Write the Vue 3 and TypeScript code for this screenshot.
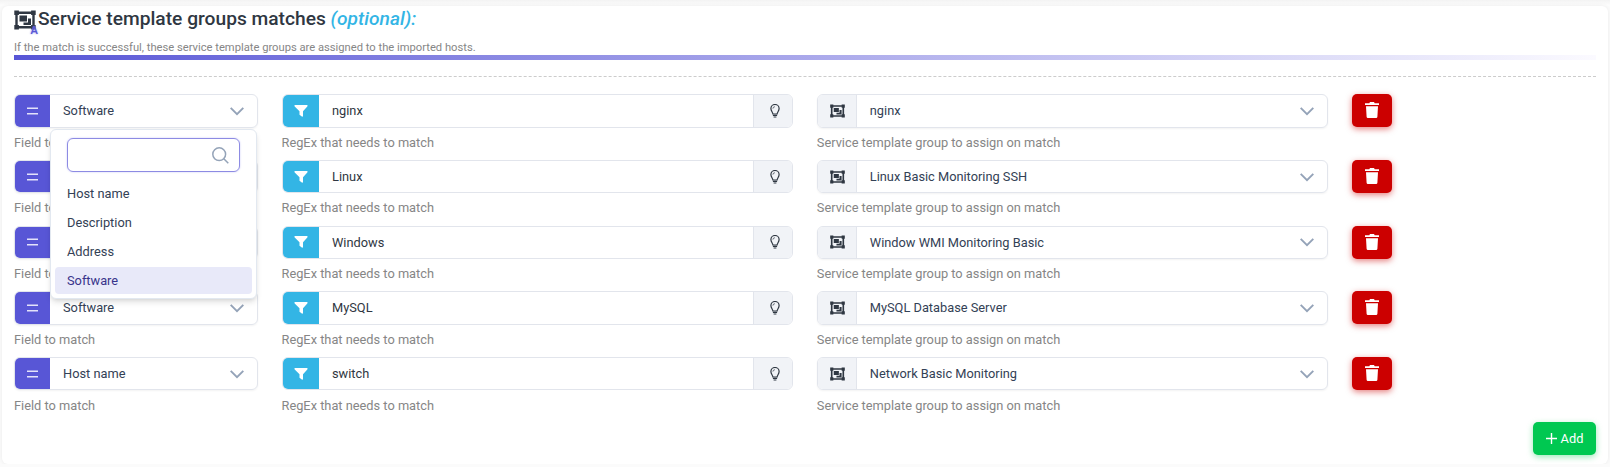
<script setup lang="ts">
import { ref } from 'vue'

interface MatchRow {
  field: string
  regex: string
  group: string
}

const fields = ['Host name', 'Description', 'Address', 'Software']
const openRow = ref<number>(0)
const search = ref('')
const rows = ref<MatchRow[]>([
  { field: 'Software', regex: 'nginx', group: 'nginx' },
  { field: 'Software', regex: 'Linux', group: 'Linux Basic Monitoring SSH' },
  { field: 'Software', regex: 'Windows', group: 'Window WMI Monitoring Basic' },
  { field: 'Software', regex: 'MySQL', group: 'MySQL Database Server' },
  { field: 'Host name', regex: 'switch', group: 'Network Basic Monitoring' },
])

function toggle(index: number): void {
  openRow.value = openRow.value === index ? -1 : index
}

function choose(row: MatchRow, field: string): void {
  row.field = field
  openRow.value = -1
}

function addRow(): void {
  rows.value.push({ field: 'Host name', regex: '', group: '' })
}
</script>

<template>
  <svg class="sprite" width="0" height="0" aria-hidden="true">
    <symbol id="object-group" viewBox="0 0 22 20">
      <path d="M2.500 2.700H19.500V17.300H2.500Z" fill="none" stroke="currentColor" stroke-width="2.400" />
      <path d="M0.300 0.500h4.600v4.600h-4.600zM17.100 0.500h4.600v4.600h-4.600zM0.300 14.900h4.600v4.600h-4.600zM17.100 14.900h4.600v4.600h-4.600z" fill="currentColor" />
      <path d="M5.500 5.500h7.500v6h-7.500zM14 8.500h3v6.500H9.500v-2.500H14z" fill="currentColor" />
    </symbol>
    <symbol id="chevron" viewBox="0 0 14 14">
      <path d="M0.700 3.800L7 10.100L13.300 3.800" fill="none" stroke="currentColor" stroke-width="1.900" />
    </symbol>
  </svg>

  <div class="previous-card"></div>
  <section class="card">
    <header>
      <h2>
        <span class="title-icon">
          <svg class="group-icon"><use href="#object-group" /></svg>
          <span class="badge">A</span>
        </span>
        <span>Service template groups matches <em>(optional):</em></span>
      </h2>
      <p class="description">If the match is successful, these service template groups are assigned to the imported hosts.</p>
      <div class="gradient"></div>
    </header>

    <div class="rows">
      <div v-for="(row, index) in rows" :key="index" class="row">
        <div class="col">
          <div class="control soft">
            <span class="addon primary">
              <svg class="equals" viewBox="0 0 11 8"><path d="M0 1.200H11M0 6.800H11" /></svg>
            </span>
            <button class="select" type="button" @click="toggle(index)">
              {{ row.field }}
              <svg class="chevron"><use href="#chevron" /></svg>
            </button>
            <div v-if="openRow === index" class="menu">
              <div class="search">
                <input v-model="search" type="text" />
                <svg viewBox="0 0 17 17">
                  <circle cx="7.200" cy="7.200" r="6.400" />
                  <path d="M11.800 11.800L16.300 16.300" />
                </svg>
              </div>
              <ul>
                <li
                  v-for="field in fields"
                  :key="field"
                  :class="{ selected: field === row.field }"
                  @click="choose(row, field)"
                >{{ field }}</li>
              </ul>
            </div>
          </div>
          <div class="help">Field to match</div>
        </div>

        <div class="col">
          <div class="control">
            <span class="addon info">
              <svg class="filter" viewBox="0 0 14 12"><path d="M0.800 0H13.200Q14 0.800 13.300 1.600L9 6.200V11.300Q8.500 12 7.800 11.600L5.500 9.800V6.200L0.700 1.600Q0 0.800 0.800 0Z" /></svg>
            </span>
            <input v-model="row.regex" class="text-input" type="text" />
            <span class="addon muted right">
              <svg class="bulb" viewBox="0 0 10 14">
                <path d="M2.900 10C2.800 8.100 0.900 7 0.900 4.500A4.100 4 0 0 1 9.100 4.500C9.100 7 7.200 8.100 7.100 10Z" />
                <path d="M2.900 4.600Q3 2.800 4.900 2.700" class="fine" />
                <path d="M2.900 11.400H7.100M3.600 13H6.400" />
              </svg>
            </span>
          </div>
          <div class="help">RegEx that needs to match</div>
        </div>

        <div class="col">
          <div class="control soft">
            <span class="addon muted left"><svg class="group-small"><use href="#object-group" /></svg></span>
            <button class="select" type="button">
              {{ row.group }}
              <svg class="chevron"><use href="#chevron" /></svg>
            </button>
          </div>
          <div class="help">Service template group to assign on match</div>
        </div>

        <button class="delete" type="button" aria-label="Delete" @click="rows.splice(index, 1)">
          <svg viewBox="0 0 14 16">
            <path d="M0 1.200H4.300L5 0H9L9.700 1.200H14V3H0ZM1 4.200H13L12.400 14.800Q12.300 16 11.100 16H2.900Q1.700 16 1.600 14.800Z" />
          </svg>
        </button>
      </div>
    </div>

    <footer>
      <button class="add" type="button" @click="addRow">
        <svg viewBox="0 0 11 11"><path d="M5.500 0V11M0 5.500H11" /></svg>Add
      </button>
    </footer>
  </section>
</template>

<style>
html,
body {
  background: #fbfbfb;
  overflow: hidden;
}
#app {
  font-family: Roboto, "Liberation Sans", sans-serif;
  font-size: 12.800px;
  line-height: 19.500px;
}
</style>

<style scoped>
* {
  box-sizing: border-box;
}
button,
input {
  font: inherit;
  border: 0;
  padding: 0;
}
.sprite {
  position: absolute;
}
.previous-card {
  height: 6px;
  background: linear-gradient(#f3f3f3, #fcfcfc 5px);
}
.card {
  height: 458px;
  margin: 0 2px;
  padding: 0 12px;
  background: #fff;
  border-radius: 6px;
  box-shadow: 0 0 4px rgba(0, 0, 0, 0.07);
}
header {
  height: 71px;
  border-bottom: 1px dashed #ccc;
}
h2 {
  display: flex;
  height: 26px;
  margin: 0;
  color: #2f3742;
  font-size: 19.200px;
  font-weight: 500;
  line-height: 26px;
}
h2 em {
  color: #33b5e5;
}
.title-icon {
  position: relative;
  width: 24px;
}
.group-icon {
  display: block;
  width: 22px;
  height: 20px;
  margin-top: 4px;
}
.badge {
  position: absolute;
  left: 16.500px;
  top: 18px;
  color: #5856d6;
  font-size: 11px;
  line-height: 14px;
  text-shadow: 0 0 2px #8d8be3;
}
.description {
  height: 23px;
  margin: 0;
  padding-top: 6px;
  color: #868686;
  font-size: 11.200px;
  line-height: 19px;
}
.gradient {
  height: 5px;
  background: linear-gradient(90deg, #5856d6, #fbfaff);
}
.rows {
  padding-top: 17.300px;
}
.row {
  display: grid;
  grid-template-columns: 243.500px 511.300px 511.200px 40px;
  column-gap: 24px;
  height: 65.700px;
  align-items: start;
}
.control {
  position: relative;
  display: flex;
  height: 33.250px;
  border: 1px solid #e2e5ec;
  border-radius: 6px;
}
.soft {
  box-shadow: 0 1px 2px rgba(0, 0, 0, 0.05);
}
.help {
  padding-top: 5.250px;
  color: #868686;
}
.addon {
  display: flex;
  flex: none;
  align-items: center;
  justify-content: center;
  width: 36px;
  border-radius: 5px 0 0 5px;
  color: #fff;
}
.primary {
  width: 35px;
  background: #5856d6;
}
.equals {
  width: 11px;
  height: 8px;
  stroke: #e3e2fa;
  stroke-width: 1.500;
}
.info {
  background: #33b5e5;
}
.muted {
  width: 39px;
  background: #f1f3f7;
  color: #2f3742;
}
.left {
  border-right: 1px solid #e2e5ec;
}
.right {
  border-left: 1px solid #e2e5ec;
  border-radius: 0 5px 5px 0;
}
.filter {
  width: 14px;
  height: 12px;
  fill: #fff;
}
.bulb {
  width: 10px;
  height: 14px;
  margin-left: 4px;
  fill: none;
  stroke: #2f3742;
  stroke-width: 1.200;
}
.bulb .fine {
  stroke-width: 0.700;
}
.group-small {
  width: 15px;
  height: 14px;
  margin-left: 1px;
}
.select {
  display: flex;
  flex: 1;
  align-items: center;
  justify-content: space-between;
  padding: 0 13px;
  background: transparent;
  color: #334155;
}
.chevron {
  width: 14px;
  height: 14px;
  color: #94a3b8;
}
.text-input {
  flex: 1;
  min-width: 0;
  padding: 0 13.500px;
  background: transparent;
  color: #2f3742;
  outline: 0;
}
.menu {
  position: absolute;
  z-index: 2;
  top: 34px;
  left: 35px;
  width: 207px;
  height: 170px;
  padding: 8px 4px 4px;
  background: #fff;
  border: 1px solid #e2e8f0;
  border-radius: 6px;
  box-shadow: 0 4px 6px -1px rgba(0, 0, 0, 0.12), 0 2px 4px -2px rgba(0, 0, 0, 0.1);
}
.search {
  display: flex;
  align-items: center;
  height: 34px;
  margin: 0 12px;
  border: 1px solid #8d8be3;
  border-radius: 6px;
  box-shadow: 0 0 2px #c7c6f5;
}
.search input {
  flex: 1;
  min-width: 0;
  padding-left: 12px;
  background: transparent;
  outline: 0;
}
.search svg {
  width: 17px;
  height: 17px;
  margin-right: 10.500px;
  fill: none;
  stroke: #94a3b8;
  stroke-width: 1.500;
}
ul {
  display: grid;
  grid-auto-rows: 27px;
  row-gap: 2px;
  margin: 8px 0 0;
  padding: 0;
  list-style: none;
}
li {
  padding-left: 12px;
  border-radius: 4px;
  color: #334155;
  line-height: 27px;
}
.selected {
  background: #e8e9f9;
  color: #38348b;
}
.delete {
  display: flex;
  align-items: center;
  justify-content: center;
  height: 33px;
  padding-bottom: 1px;
  background: #c00;
  border-radius: 5px;
  box-shadow: 0 2px 6px rgba(204, 0, 0, 0.5);
}
.delete svg {
  width: 14px;
  height: 16px;
  fill: #fff;
}
footer {
  display: flex;
  justify-content: flex-end;
  margin-top: -0.700px;
}
.add {
  display: flex;
  gap: 4px;
  align-items: center;
  justify-content: center;
  width: 63px;
  height: 33px;
  background: #00c851;
  border-radius: 5px;
  box-shadow: 0 2px 6px rgba(0, 200, 81, 0.4);
  color: #fff;
}
.add svg {
  width: 11px;
  height: 11px;
  stroke: #fff;
  stroke-width: 1.400;
}
</style>
